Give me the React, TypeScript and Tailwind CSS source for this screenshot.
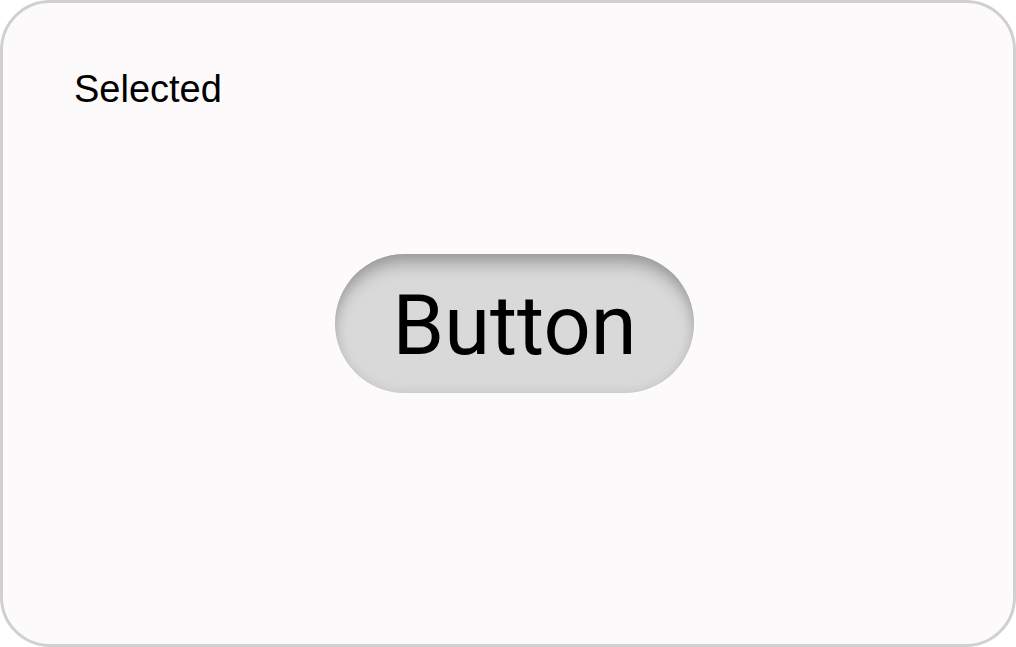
import React from "react";

export default function App() {
  return (
    <div className="w-[1016px] h-[647px] bg-white">
      <div className="w-full h-full rounded-[50px] border-[3px] border-[#d0d0d0] bg-[#fcfafb] flex flex-col">
        <div
          className="pl-[71px] pt-[64px] text-[38px] leading-[44px] text-black"
          style={{ fontFamily: '"Liberation Sans", Arial, sans-serif' }}
        >
          Selected
        </div>
        <div className="flex justify-center pt-[143px] pl-[13px]">
          <button
            className="w-[359px] h-[139px] rounded-full bg-[#d9d9d9] flex items-center justify-center text-black text-[83px] shadow-[inset_0_14px_16px_-4px_rgba(0,0,0,0.25),inset_0_0_12px_rgba(0,0,0,0.1)]"
            style={{ fontFamily: 'Roboto, "Noto Sans", sans-serif' }}
          >
            <span className="leading-none relative top-[2px]">Button</span>
          </button>
        </div>
      </div>
    </div>
  );
}
